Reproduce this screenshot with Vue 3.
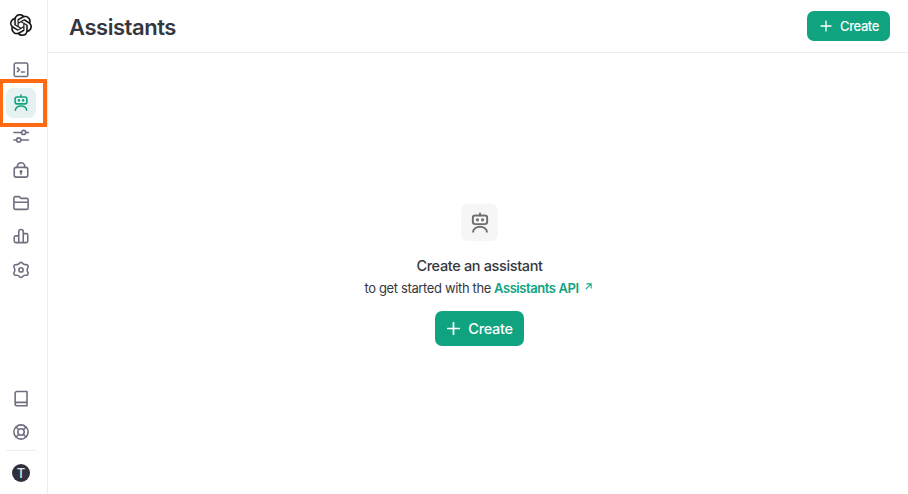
<script setup>
const mainNav = ['playground', 'assistants', 'tuning', 'keys', 'files', 'usage', 'settings']
const footNav = ['docs', 'help']
const active = 'assistants'

const icons = {
  playground: '<rect x="3" y="2.700" width="18" height="18" rx="2.200"/><path d="M7.300 9.200l2.700 2.500-2.700 2.500M12.500 14.700h4"/>',
  assistants: '<path d="M12 1.500v2.200M4.500 21.600a7.500 5.600 0 0 1 15 0"/><rect x="4.200" y="3.900" width="15.600" height="9.300" rx="2.500"/><circle cx="9.200" cy="8.500" r=".7" fill="currentColor"/><circle cx="14.800" cy="8.500" r=".7" fill="currentColor"/>',
  tuning: '<path d="M2.500 7.300h10M18.500 7.300h3.500M2.500 17.300h3.500M12 17.300h10"/><circle cx="15.500" cy="7.300" r="2.800"/><circle cx="9" cy="17.300" r="2.800"/>',
  keys: '<rect x="3" y="8.500" width="18" height="13" rx="2.500"/><path d="M7 8.500V7.300a5 5 0 0 1 10 0v1.200M12 14.500v3"/><circle cx="12" cy="14" r="1" fill="currentColor"/>',
  files: '<path d="M2.500 18.500v-13A2 2 0 0 1 4.500 3.500h4.600a2 2 0 0 1 1.600.8l1.100 1.500h7.700a2 2 0 0 1 2 2v10.700a2 2 0 0 1-2 2h-15a2 2 0 0 1-2-2zM2.500 11h19"/>',
  usage: '<path d="M9 20.800V5.800a3 2.500 0 0 1 6 0v15M9 11.800H5a2 2 0 0 0-2 2v5a2 2 0 0 0 2 2h14a2 2 0 0 0 2-2v-8a2 2 0 0 0-2-2h-4"/>',
  settings: '<path d="M9.900 3Q12 .7 14.100 3Q15.800 5.200 18.300 4.700Q21.600 4.700 21.500 8.100Q20.200 10.200 20.200 11.900Q20.200 13.600 21.500 15.700Q21.600 19.100 18.300 19.100Q15.800 18.600 14.100 20.800Q12 23.100 9.900 20.800Q8.200 18.600 5.700 19.100Q2.400 19.100 2.500 15.700Q3.800 13.600 3.800 11.900Q3.800 10.200 2.500 8.100Q2.400 4.700 5.700 4.700Q8.200 5.200 9.900 3z"/><circle cx="12" cy="11.900" r="2.800"/>',
  docs: '<path d="M20 16.500V2H6.500A2.300 2.300 0 0 0 4.200 4.300v14.400a2.300 2.300 0 0 0 2.300 2.300H20V16.500H6.500a2.300 2.300 0 0 0-2.300 2.200"/>',
  help: '<circle cx="12" cy="12" r="9.500"/><circle cx="12" cy="12" r="4.300"/><path d="M5.400 5.400l3.600 3.600M18.600 5.400l-3.600 3.600M5.400 18.600l3.600-3.600M18.600 18.600l-3.600-3.600"/>',
}
</script>

<template>
  <div class="app">
    <aside class="sidebar">
      <svg class="logo" viewBox="0 0 24 24" aria-label="OpenAI">
        <path d="M22.2819 9.8211a5.9847 5.9847 0 0 0-.5157-4.9108 6.0462 6.0462 0 0 0-6.5098-2.9A6.0651 6.0651 0 0 0 4.9807 4.1818a5.9847 5.9847 0 0 0-3.9977 2.9 6.0462 6.0462 0 0 0 .7427 7.0966 5.98 5.98 0 0 0 .511 4.9107 6.051 6.051 0 0 0 6.5146 2.9001A5.9847 5.9847 0 0 0 13.2599 24a6.0557 6.0557 0 0 0 5.7718-4.2058 5.9894 5.9894 0 0 0 3.9977-2.9001 6.0557 6.0557 0 0 0-.7475-7.0729zm-9.022 12.6081a4.4755 4.4755 0 0 1-2.8764-1.0408l.1419-.0804 4.7783-2.7582a.7948.7948 0 0 0 .3927-.6813v-6.7369l2.02 1.1686a.071.071 0 0 1 .038.052v5.5826a4.504 4.504 0 0 1-4.4945 4.4944zm-9.6607-4.1254a4.4708 4.4708 0 0 1-.5346-3.0137l.142.0852 4.783 2.7582a.7712.7712 0 0 0 .7806 0l5.8428-3.3685v2.3324a.0804.0804 0 0 1-.0332.0615L9.74 19.9502a4.4992 4.4992 0 0 1-6.1408-1.6464zM2.3408 7.8956a4.485 4.485 0 0 1 2.3655-1.9728V11.6a.7664.7664 0 0 0 .3879.6765l5.8144 3.3543-2.0201 1.1685a.0757.0757 0 0 1-.071 0l-4.8303-2.7865A4.504 4.504 0 0 1 2.3408 7.872zm16.5963 3.8558L13.1038 8.364 15.1192 7.2a.0757.0757 0 0 1 .071 0l4.8303 2.7913a4.4944 4.4944 0 0 1-.6765 8.1042v-5.6772a.79.79 0 0 0-.407-.667zm2.0107-3.0231l-.142-.0852-4.7735-2.7818a.7759.7759 0 0 0-.7854 0L9.409 9.2297V6.8974a.0662.0662 0 0 1 .0284-.0615l4.8303-2.7866a4.4992 4.4992 0 0 1 6.6802 4.66zM8.3065 12.863l-2.02-1.1638a.0804.0804 0 0 1-.038-.0567V6.0742a4.4992 4.4992 0 0 1 7.3757-3.4537l-.142.0805L8.704 5.459a.7948.7948 0 0 0-.3927.6813zm1.0976-2.3654l2.602-1.4998 2.6069 1.4998v2.9994l-2.5974 1.4997-2.6067-1.4997Z" />
      </svg>
      <nav class="nav">
        <a v-for="name in mainNav" :key="name" class="item" :class="{ active: name === active }">
          <svg class="icon" viewBox="0 0 24 24" v-html="icons[name]"></svg>
          <span v-if="name === active" class="highlight"></span>
        </a>
      </nav>
      <nav class="nav foot">
        <a v-for="name in footNav" :key="name" class="item">
          <svg class="icon" viewBox="0 0 24 24" v-html="icons[name]"></svg>
        </a>
      </nav>
      <div class="divider"></div>
      <div class="avatar">T</div>
    </aside>

    <div class="page">
      <header class="header">
        <h1 class="title">Assistants</h1>
        <button class="btn small">
          <svg class="plus" viewBox="0 0 12 12"><path d="M6 1v10M1 6h10" /></svg>
          <span>Create</span>
        </button>
      </header>
      <main class="empty">
        <div class="tile">
          <svg class="icon bot" viewBox="0 0 24 24" v-html="icons.assistants"></svg>
        </div>
        <h2 class="heading">Create an assistant</h2>
        <p class="sub">
          <span class="lead">to get started with the</span>
          <a class="link">Assistants API</a>
          <svg class="arrow" viewBox="0 0 8 8"><path d="M1 7l6-6M1.800 1H7v5.200" /></svg>
        </p>
        <button class="btn large">
          <svg class="plus" viewBox="0 0 12 12"><path d="M6 .7v10.600M.7 6h10.600" /></svg>
          <span>Create</span>
        </button>
      </main>
    </div>
  </div>
</template>

<style>
body {
  background: #fff;
  overflow: hidden;
}
</style>

<style scoped>
.app {
  display: flex;
  height: 100vh;
  font-family: Inter, "Liberation Sans", sans-serif;
  color: #353740;
}
.sidebar {
  box-sizing: border-box;
  width: 48px;
  flex: none;
  display: flex;
  flex-direction: column;
  align-items: center;
  padding: 14px 5px 12px 0;
  border-right: 1px solid #ececf1;
}
.logo {
  flex: none;
  width: 22px;
  height: 22px;
  fill: #111;
  stroke: #111;
  stroke-width: 0.2;
}
.nav {
  display: flex;
  flex-direction: column;
  gap: 3.35px;
  margin-top: 18.6px;
}
.foot {
  margin-top: auto;
}
.item {
  position: relative;
  display: flex;
  align-items: center;
  justify-content: center;
  width: 30px;
  height: 30px;
  border-radius: 7px;
  color: #6e6e80;
}
.item.active {
  background: #e6f2f1;
  color: #10a37f;
}
.highlight {
  position: absolute;
  top: -9.4px;
  left: -6px;
  box-sizing: border-box;
  width: 47px;
  height: 48.600px;
  border: 4px solid #ff6a13;
  border-left-width: 3px;
}
.icon {
  width: 18px;
  height: 18px;
  fill: none;
  stroke: currentColor;
  stroke-width: 2.1;
  stroke-linecap: round;
  stroke-linejoin: round;
}
.divider {
  width: 30px;
  height: 1px;
  margin: 3px 0 13px;
  background: #ececf1;
}
.avatar {
  flex: none;
  width: 18px;
  height: 18px;
  border-radius: 50%;
  background: #2f323c;
  color: #e5e5ea;
  font-size: 13px;
  line-height: 18px;
  font-weight: 500;
  text-align: center;
}
.page {
  flex: 1;
  display: flex;
  flex-direction: column;
}
.header {
  box-sizing: border-box;
  height: 53px;
  display: flex;
  align-items: center;
  justify-content: space-between;
  padding: 0 18px 0 21px;
  border-bottom: 1px solid #ececf1;
}
.title {
  margin: 0;
  padding-top: 1px;
  font-size: 22px;
  line-height: 28px;
  font-weight: 600;
  letter-spacing: -0.45px;
}
.btn {
  display: flex;
  align-items: center;
  justify-content: center;
  border: 0;
  padding: 0;
  background: #10a37f;
  color: #fff;
  font-family: inherit;
  font-weight: 500;
}
.plus {
  fill: none;
  stroke: #fff;
  stroke-linecap: round;
}
.small {
  width: 83px;
  height: 30px;
  border-radius: 7px;
  gap: 8px;
  padding-left: 2px;
  font-size: 13px;
  letter-spacing: -0.4px;
}
.small .plus {
  width: 12px;
  height: 12px;
  stroke-width: 1.3;
}
.large {
  width: 89px;
  height: 35px;
  margin-top: 14px;
  border-radius: 7px;
  gap: 8px;
  padding-left: 1px;
  font-size: 14.5px;
  letter-spacing: -0.3px;
}
.large .plus {
  width: 13px;
  height: 13px;
  stroke-width: 1.6;
}
.empty {
  display: flex;
  flex-direction: column;
  align-items: center;
  padding: 151px 0 0 3px;
}
.tile {
  display: flex;
  align-items: center;
  justify-content: center;
  width: 37px;
  height: 37px;
  border-radius: 7px;
  background: #f6f6f6;
  color: #6e6e6e;
}
.bot {
  width: 22px;
  height: 22px;
}
.heading {
  margin: 15px 0 0;
  font-size: 14.5px;
  line-height: 20px;
  font-weight: 500;
  letter-spacing: -0.36px;
}
.sub {
  display: flex;
  align-items: center;
  margin: 3px 3px 0 0;
  font-size: 13px;
  line-height: 18px;
}
.lead {
  letter-spacing: -0.36px;
}
.link {
  margin-left: 3px;
  color: #10a37f;
  font-weight: 600;
  letter-spacing: -0.43px;
}
.arrow {
  width: 7px;
  height: 7px;
  margin: -4px 0 0 6px;
  fill: none;
  stroke: #10a37f;
  stroke-width: 1.2;
}
</style>
